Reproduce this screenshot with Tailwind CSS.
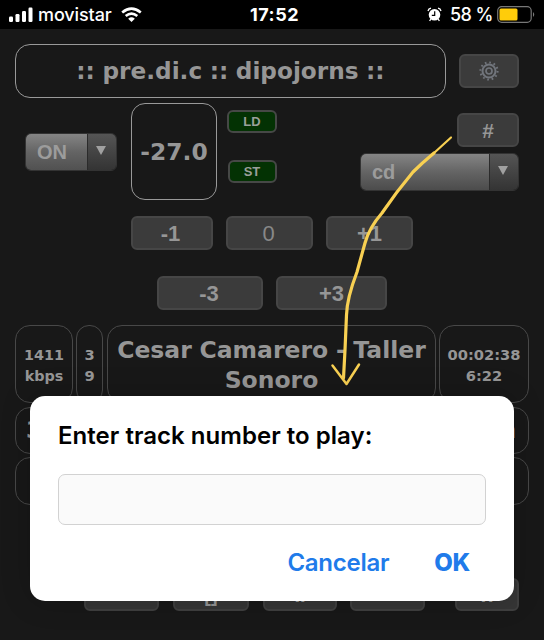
<!DOCTYPE html>
<html lang="es">
<head>
<meta charset="utf-8">
<title>pre.di.c</title>
<script src="https://cdn.jsdelivr.net/npm/@tailwindcss/browser@4"></script>
</head>
<body class="bg-[#181818]">
<div class="relative w-[544px] h-[640px] overflow-hidden bg-[#181818] text-[#969696] font-['DejaVu_Sans',sans-serif] font-bold antialiased">
  <header class="h-[29px] bg-black text-white flex items-center font-['Inter',sans-serif] font-medium text-[18px] leading-none whitespace-nowrap">
    <svg class="ml-[9px] w-[24px] h-[16px] shrink-0" viewBox="0 0 24 16" fill="#fff"><rect x="0" y="9.500" width="4" height="5.500" rx="1.200"/><rect x="6.500" y="7" width="4" height="8" rx="1.200"/><rect x="13" y="4" width="4" height="11" rx="1.200"/><rect x="19.500" y="0.500" width="4" height="14.500" rx="1.200"/></svg>
    <span class="ml-[5px] w-[73px] pt-px tracking-[-0.1px]">movistar</span>
    <svg class="ml-[10px] w-[21px] h-[16px] shrink-0" viewBox="0 0 21 16" fill="none" stroke="#fff" stroke-width="2.600"><path d="M1.200 5.400Q10.500-2.300 19.800 5.400"/><path d="M4.700 9Q10.500 4.200 16.300 9"/><path d="M10.500 15l-3.300-3.300Q10.500 8.900 13.800 11.700z" fill="#fff" stroke="none"/></svg>
    <span class="ml-[108px] w-[52px] pt-px font-bold tracking-[0.5px]">17:52</span>
    <svg class="ml-[125px] w-[15px] h-[15px] shrink-0" viewBox="0 0 15 15"><circle cx="7.500" cy="7.800" r="5.800" fill="#fff"/><path d="M3.800 12.200l-1.200 1.800M11.200 12.200l1.200 1.800M1 4Q1.500 1.700 4 1.200M14 4Q13.500 1.700 11 1.200" fill="none" stroke="#fff" stroke-width="1.300"/><path d="M7.700 4.300v4H4.800" fill="none" stroke="#000" stroke-width="1.200"/></svg>
    <span class="ml-[8px] w-[43px] pt-px tracking-[-0.6px]">58 %</span>
    <svg class="ml-[4px] w-[39px] h-[17px] shrink-0" viewBox="0 0 39 17"><rect x="0.700" y="0.700" width="33.500" height="15.600" rx="4" fill="none" stroke="#777" stroke-width="1.200"/><rect x="2.500" y="2.500" width="18" height="12" rx="1.500" fill="#ffcc0a"/><path d="M36 6q2.500 2.500 0 5z" fill="#777"/></svg>
  </header>

  <main>
    <section class="flex items-center mt-[14px] ml-[15px] h-[55px]">
      <h1 class="w-[431px] h-[54px] rounded-[15px] border border-[#999] flex items-center justify-center text-[23.2px] [word-spacing:-0.5px] whitespace-nowrap pt-[2px]"><span>:: pre.di.c :: dipojorns ::</span></h1>
      <button class="ml-[13px] w-[60px] h-[34px] rounded-[6px] bg-[#3b3b3b] border-2 border-[#464646] flex items-center justify-center">
        <svg class="w-[20px] h-[20px]" viewBox="0 0 20 20" fill="none" stroke="#71757c"><circle cx="10" cy="10" r="8.600" stroke-width="2" stroke-dasharray="1.700 2.803"/><circle cx="10" cy="10" r="6.500" stroke-width="2"/><circle cx="10" cy="10" r="3" stroke-width="1.700"/></svg>
      </button>
    </section>

    <section class="flex ml-[25px] mt-[5px] h-[97px] font-['Liberation_Sans',sans-serif]">
      <div class="mt-[30px] w-[92px] h-[38px] rounded-[6px] border border-[#333] overflow-hidden flex text-[20px]">
        <div class="w-[61px] bg-linear-to-b from-[#858585] via-[#646464] to-[#515151] pl-[11px] leading-[36px] text-[#9c9c9c]">ON</div>
        <div class="flex-1 bg-linear-to-b from-[#555] to-[#343434] border-l border-[#2b2b2b] flex justify-center pt-[12px]"><svg class="w-[10px] h-[9px] mr-[3px]" viewBox="0 0 10 9"><path d="M0 0h10L5 9z" fill="#a0a0a0"/></svg></div>
      </div>
      <div class="ml-[14px] w-[86px] h-[97px] rounded-[14px] border border-[#999] flex items-center justify-center text-[23.4px] pt-[3px] whitespace-nowrap font-['DejaVu_Sans',sans-serif]">-27.0</div>
      <div class="ml-[10px] mt-[7px] w-[50px] flex flex-col items-center gap-[27px] text-[13px] leading-none text-[#9a9f9a]">
        <div class="w-[50px] h-[23px] rounded-[6px] border-2 border-[#464846] bg-[#033203] flex items-center justify-center">LD</div>
        <div class="w-[49px] h-[23px] rounded-[6px] border-2 border-[#464846] bg-[#033203] flex items-center justify-center">ST</div>
      </div>
      <div class="ml-[83px] mt-[10px] w-[159px] flex flex-col items-end gap-[6px]">
        <button class="w-[62px] h-[34px] rounded-[6px] bg-[#3b3b3b] border-2 border-[#464646] text-[21px] leading-none">#</button>
        <div class="w-[159px] h-[38px] rounded-[6px] border border-[#333] overflow-hidden flex text-[20px]">
          <div class="w-[128px] bg-linear-to-b from-[#858585] via-[#646464] to-[#4c4c4c] pl-[11px] leading-[36px] text-[#9c9c9c]">cd</div>
          <div class="flex-1 bg-linear-to-b from-[#555] to-[#343434] border-l border-[#2b2b2b] flex justify-center pt-[12px]"><svg class="w-[10px] h-[9px] mr-[3px]" viewBox="0 0 10 9"><path d="M0 0h10L5 9z" fill="#a0a0a0"/></svg></div>
        </div>
      </div>
    </section>

    <section class="flex ml-[131px] mt-[16px] h-[34px] gap-[13px] font-['Liberation_Sans',sans-serif] text-[22px] leading-none">
      <button class="w-[82px] rounded-[6px] bg-[#3b3b3b] border-2 border-[#464646] pt-[2px] pr-[3px]">-1</button>
      <button class="w-[87px] rounded-[6px] bg-[#3b3b3b] border-2 border-[#464646] pt-[2px] pr-[2px] font-normal text-[#888]">0</button>
      <button class="w-[87px] rounded-[6px] bg-[#3b3b3b] border-2 border-[#464646] pt-[2px]">+1</button>
    </section>
    <section class="flex ml-[157px] mt-[26px] h-[34px] gap-[13px] font-['Liberation_Sans',sans-serif] text-[22px] leading-none">
      <button class="w-[106px] rounded-[6px] bg-[#3b3b3b] border-2 border-[#464646] pt-[2px] pr-[2px]">-3</button>
      <button class="w-[111px] rounded-[6px] bg-[#3b3b3b] border-2 border-[#464646] pt-[2px]">+3</button>
    </section>

    <section class="flex ml-[15px] mt-[15px] h-[78px] text-center text-[14.7px] leading-[20.5px] whitespace-nowrap">
      <div class="w-[58px] rounded-[15px] border border-[#484848] flex items-center justify-center pt-[3px] text-[14.4px]"><span>1411<br>kbps</span></div>
      <div class="ml-[3px] w-[27px] rounded-[13px] border border-[#484848] flex items-center justify-center pt-[3px]"><span>3<br>9</span></div>
      <div class="ml-[4px] w-[329px] rounded-[15px] border border-[#484848] flex items-center justify-center text-[23.5px] [word-spacing:-0.5px] leading-[30px] pt-[2px]"><span>Cesar Camarero - Taller<br>Sonoro</span></div>
      <div class="ml-[3px] w-[90px] rounded-[15px] border border-[#484848] flex items-center justify-center pt-[3px]"><span>00:02:38<br>6:22</span></div>
    </section>
    <section class="ml-[15px] mt-[4px] w-[514px] h-[47px] rounded-[15px] border border-[#484848] flex items-center justify-between pl-[10px] pr-[12px] text-[23px]"><span>3</span><span>n</span></section>
    <section class="ml-[15px] mt-[3px] w-[514px] h-[48px] rounded-[15px] border border-[#484848]"></section>

    <section class="flex ml-[84px] mt-[73px] h-[33px] font-['Liberation_Sans',sans-serif] text-[20px] leading-none">
      <button class="w-[75px] rounded-[6px] bg-[#363636] border-2 border-[#404040]"></button>
      <button class="ml-[14px] w-[76px] rounded-[6px] bg-[#363636] border-2 border-[#404040] pt-[1px]">[]</button>
      <button class="ml-[14px] w-[74px] rounded-[6px] bg-[#363636] border-2 border-[#404040]">II</button>
      <button class="ml-[13px] w-[75px] rounded-[6px] bg-[#363636] border-2 border-[#404040]"></button>
      <button class="ml-[30px] w-[64px] rounded-[6px] bg-[#363636] border-2 border-[#404040]">x</button>
    </section>
  </main>

  <svg class="absolute left-0 top-0 w-[544px] h-[400px]" viewBox="0 0 544 400" fill="none" stroke="#f8d052" stroke-linecap="round" stroke-linejoin="round">
    <path d="M451 137.500L434 153" stroke-width="2.200"/>
    <path d="M434 153Q422 163 413 172Q397 191 382 213Q369 228 365 243L357 272Q347 298 346.500 315L345 350L343.500 378" stroke-width="3.200"/>
    <path d="M332.500 365.500L346.500 384L359 364.500" stroke-width="2.500"/>
  </svg>

  <div role="dialog" class="absolute left-[30px] top-[396px] w-[484px] h-[205px] rounded-[15px] bg-white shadow-[0_0_30px_rgba(0,0,0,0.2)] font-['Inter',sans-serif] px-[28px] pt-[24px]">
    <h2 class="text-black font-semibold text-[24px] leading-[32px] tracking-[0.03px] whitespace-nowrap">Enter track number to play:</h2>
    <input type="text" aria-label="Track" class="block mt-[22px] w-[428px] h-[51px] rounded-[7px] border border-[#d2d2d2] bg-[#fafafa]">
    <div class="flex justify-end mt-[22px] pr-[16px] gap-[45px] text-[#207bea] text-[24px] leading-[32px] whitespace-nowrap">
      <button class="font-semibold tracking-[-0.25px]">Cancelar</button>
      <button class="font-extrabold tracking-[-0.3px]">OK</button>
    </div>
  </div>
</div>
</body>
</html>
